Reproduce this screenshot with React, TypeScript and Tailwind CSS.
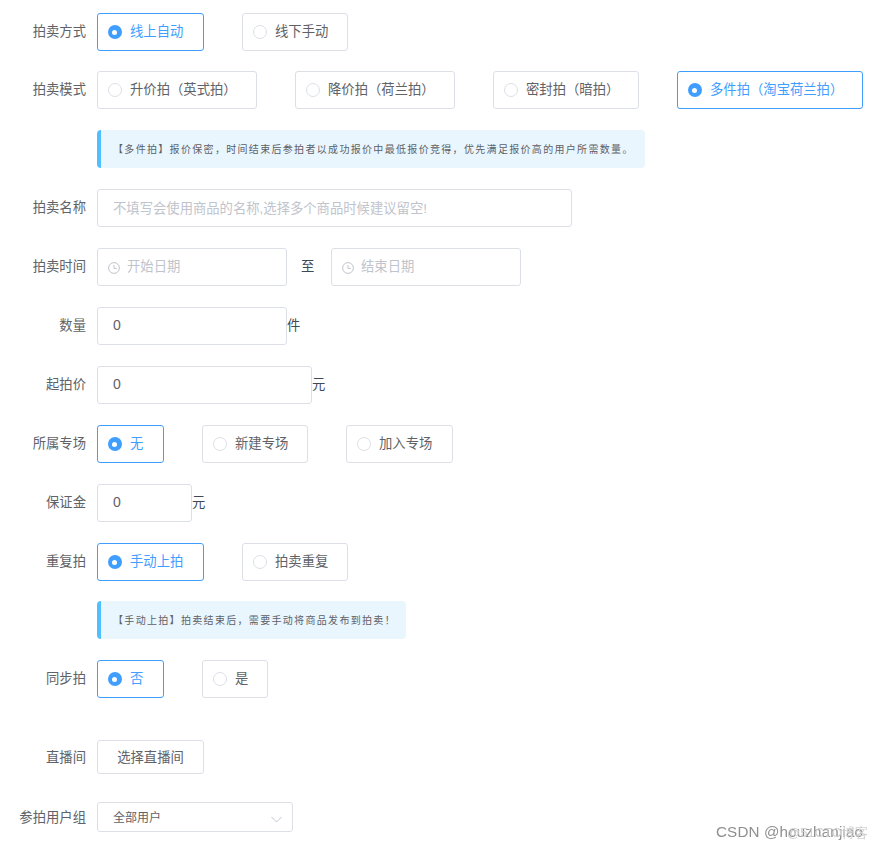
import React from "react";

const font = { fontFamily: '"Liberation Sans","Noto Sans CJK SC",sans-serif' };

function Row({ label, children, className = "mb-[21px]", labelClass = "" }: { label: string; children: React.ReactNode; className?: string; labelClass?: string }) {
  return (
    <div className={`flex items-center ${className}`}>
      <div className={`w-[86px] shrink-0 text-right text-[13.33px] text-[#606266] ${labelClass}`}>{label}</div>
      <div className="ml-[11px] flex items-center">{children}</div>
    </div>
  );
}

function Radio({ text, active, w, mr }: { text: string; active?: boolean; w: string; mr?: string }) {
  return (
    <div
      className={`flex h-[38px] items-center rounded-[3px] border pl-[9.5px] ${w} ${mr ?? ""} ${
        active ? "border-[#409eff] text-[#409eff]" : "border-[#dcdfe6] text-[#606266]"
      }`}
    >
      {active ? (
        <span className="flex h-[14px] w-[14px] items-center justify-center rounded-full bg-[#409eff]">
          <span className="h-[5px] w-[5px] rounded-full bg-white" />
        </span>
      ) : (
        <span className="h-[14px] w-[14px] rounded-full border border-[#dcdfe6] bg-white" />
      )}
      <span className="ml-[8.5px] whitespace-nowrap text-[13.33px]">{text}</span>
    </div>
  );
}

function Alert({ text, w }: { text: string; w: string }) {
  return (
    <div className={`ml-[97px] flex h-[38px] items-center whitespace-nowrap rounded-[4px] border-l-[4px] border-[#50bfff] bg-[#e9f6fe] pl-[12px] text-[10px] tracking-[1.32px] text-[#5e6166] ${w}`}>
      {text}
    </div>
  );
}

function ClockIcon() {
  return (
    <svg width="12" height="12" viewBox="0 0 12 12" fill="none" stroke="#c0c4cc" strokeWidth="1" className="mt-[2px] shrink-0">
      <circle cx="6" cy="6" r="5.4" />
      <path d="M6 3V6.4H8.8" />
    </svg>
  );
}

function DateBox({ text }: { text: string }) {
  return (
    <div className="flex h-[38px] w-[190px] items-center rounded-[3px] border border-[#dcdfe6] pl-[10px]">
      <ClockIcon />
      <span className="ml-[7px] text-[13.33px] text-[#c0c4cc]">{text}</span>
    </div>
  );
}

function NumBox({ w, unit }: { w: string; unit: string }) {
  return (
    <>
      <input
        readOnly
        value="0"
        className={`h-[38px] rounded-[3px] border border-[#dcdfe6] pl-[15px] pb-[2px] text-[14px] text-[#606266] outline-none ${w}`}
      />
      <span className="text-[13.33px] text-[#404a55]">{unit}</span>
    </>
  );
}

export default function App() {
  return (
    <div className="relative h-[851px] w-[881px] overflow-hidden bg-white pt-[13px]" style={font}>
      <Row label="拍卖方式" className="mb-[20px]">
        <Radio text="线上自动" active w="w-[107px]" mr="mr-[38px]" />
        <Radio text="线下手动" w="w-[106px]" />
      </Row>
      <Row label="拍卖模式">
        <Radio text="升价拍（英式拍）" w="w-[160px]" mr="mr-[38px]" />
        <Radio text="降价拍（荷兰拍）" w="w-[160px]" mr="mr-[38px]" />
        <Radio text="密封拍（暗拍）" w="w-[146px]" mr="mr-[38px]" />
        <Radio text="多件拍（淘宝荷兰拍）" active w="w-[186px]" />
      </Row>
      <div className="mb-[21px]">
        <Alert w="w-[548px]" text="【多件拍】报价保密，时间结束后参拍者以成功报价中最低报价竞得，优先满足报价高的用户所需数量。" />
      </div>
      <Row label="拍卖名称">
        <input
          readOnly
          placeholder="不填写会使用商品的名称,选择多个商品时候建议留空!"
          className="h-[38px] w-[475px] rounded-[3px] border border-[#dcdfe6] pl-[15px] text-[13.33px] outline-none placeholder:text-[#c0c4cc]"
        />
      </Row>
      <Row label="拍卖时间">
        <DateBox text="开始日期" />
        <span className="ml-[14px] w-[30px] text-[13.33px] text-[#404a55]">至</span>
        <DateBox text="结束日期" />
      </Row>
      <Row label="数量">
        <NumBox w="w-[190px]" unit="件" />
      </Row>
      <Row label="起拍价">
        <NumBox w="w-[215px]" unit="元" />
      </Row>
      <Row label="所属专场">
        <Radio text="无" active w="w-[67px]" mr="mr-[38px]" />
        <Radio text="新建专场" w="w-[106px]" mr="mr-[38px]" />
        <Radio text="加入专场" w="w-[107px]" />
      </Row>
      <Row label="保证金">
        <NumBox w="w-[95px]" unit="元" />
      </Row>
      <Row label="重复拍" className="mb-[20px]">
        <Radio text="手动上拍" active w="w-[107px]" mr="mr-[38px]" />
        <Radio text="拍卖重复" w="w-[106px]" />
      </Row>
      <div className="mb-[21px]">
        <Alert w="w-[309px]" text="【手动上拍】拍卖结束后，需要手动将商品发布到拍卖！" />
      </div>
      <Row label="同步拍" className="mb-[42px]">
        <Radio text="否" active w="w-[67px]" mr="mr-[38px]" />
        <Radio text="是" w="w-[66px]" />
      </Row>
      <Row label="直播间" className="mb-[28px]" labelClass="pt-[2px]">
        <button className="h-[34px] w-[107px] rounded-[3px] border border-[#dcdfe6] pt-[1px] text-[13.33px] text-[#606266]">
          选择直播间
        </button>
      </Row>
      <Row label="参拍用户组" labelClass="pt-[1px]">
        <div className="flex h-[30px] w-[196px] items-center justify-between rounded-[3px] border border-[#dcdfe6] pl-[15px] pr-[10px] text-[12px] text-[#606266]">
          <span className="pt-[1px]">全部用户</span>
          <svg width="11" height="7" viewBox="0 0 11 7" fill="none" stroke="#c0c4cc" strokeWidth="1" className="mt-[5px]">
            <path d="M0.5 1L5.5 6L10.5 1" />
          </svg>
        </div>
      </Row>
      <div className="absolute left-[716px] top-[823px] whitespace-nowrap text-[15.2px] leading-[18px] tracking-[0.15px] text-[#8f8f8f] blur-[0.4px]">
        CSDN @houzhanjiao
      </div>
      <div className="absolute left-[787px] top-[825px] whitespace-nowrap text-[13px] leading-[16px] text-[#d0d0d0] blur-[0.5px]">
        @51CTO博客
      </div>
    </div>
  );
}
